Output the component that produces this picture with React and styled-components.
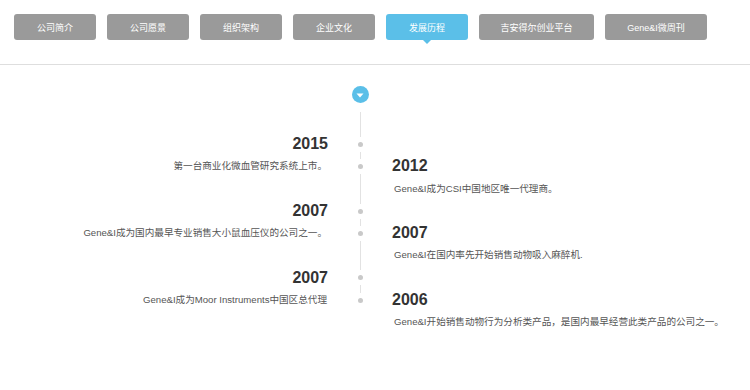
import React from 'react';
import styled, { createGlobalStyle } from 'styled-components';

const tabs = [
    { label: '公司简介', width: 82 },
    { label: '公司愿景', width: 82 },
    { label: '组织架构', width: 82 },
    { label: '企业文化', width: 82 },
    { label: '发展历程', width: 82, active: true },
    { label: '吉安得尔创业平台', width: 115 },
    { label: 'Gene&I微周刊', width: 102 },
];

// row = first grid row of the entry (year), desc sits on the next row
const events = [
    { side: 'left', row: 1, year: '2015', text: '第一台商业化微血管研究系统上市。' },
    { side: 'right', row: 2, year: '2012', text: 'Gene&I成为CSI中国地区唯一代理商。' },
    { side: 'left', row: 4, year: '2007', text: 'Gene&I成为国内最早专业销售大小鼠血压仪的公司之一。' },
    { side: 'right', row: 5, year: '2007', text: 'Gene&I在国内率先开始销售动物吸入麻醉机.' },
    { side: 'left', row: 7, year: '2007', text: 'Gene&I成为Moor Instruments中国区总代理' },
    { side: 'right', row: 8, year: '2006', text: 'Gene&I开始销售动物行为分析类产品，是国内最早经营此类产品的公司之一。' },
];

const GlobalStyle = createGlobalStyle`
body {
    margin: 0;
    background: #fff;
    font-family: "Liberation Sans", "Noto Sans CJK SC", sans-serif;
}`

export default function App() {
    return <Page>
        <GlobalStyle />
        <TabBar>
            {tabs.map(t => (
                <Tab key={t.label} $active={t.active} $width={t.width}>{t.label}</Tab>
            ))}
        </TabBar>
        <Timeline>
            <Head>
                <Circle>
                    <svg width="8" height="5" viewBox="0 0 8 5">
                        <path d="M0.5 0.5 L7.5 0.5 L4 4.5 Z" fill="#fff" />
                    </svg>
                </Circle>
            </Head>
            <Axis />
            {events.map((e, i) => (
                <React.Fragment key={i}>
                    <Dot $row={e.row + 1} />
                    <Year $side={e.side} $row={e.row + 1}>{e.year}</Year>
                    <Desc $side={e.side} $row={e.row + 2}>{e.text}</Desc>
                </React.Fragment>
            ))}
        </Timeline>
    </Page>;
}

const Page = styled.div`
width: 750px;
height: 390px;
background: #fff;`

const TabBar = styled.div`
display: flex;
gap: 11px;
padding: 14px 14px 24px;
border-bottom: 1px solid #dedede;`

const Tab = styled.div`
position: relative;
width: ${p => p.$width}px;
height: 26px;
border-radius: 3px;
background: ${p => p.$active ? '#5bbfe8' : '#9a9a9a'};
color: #fff;
font-size: 9px;
display: flex;
align-items: center;
justify-content: center;
&::after {
    content: '';
    display: ${p => p.$active ? 'block' : 'none'};
    position: absolute;
    left: 50%;
    bottom: -4px;
    margin-left: -4px;
    border-left: 4px solid transparent;
    border-right: 4px solid transparent;
    border-top: 4px solid #5bbfe8;
}`

const Timeline = styled.div`
display: grid;
grid-template-columns: 330px 60px 1fr;
grid-template-rows: 47px repeat(9, 22.3px);
margin-top: 21px;`

const Head = styled.div`
grid-column: 2;
grid-row: 1;
display: flex;
justify-content: center;`

const Circle = styled.div`
width: 17px;
height: 17px;
border-radius: 50%;
background: #5bbfe8;
display: flex;
align-items: center;
justify-content: center;
padding-top: 1px;
box-sizing: border-box;`

const Axis = styled.div`
grid-column: 2;
grid-row: 1 / 10;
position: relative;
&::before {
    content: '';
    position: absolute;
    left: 29.5px;
    width: 1px;
    top: 26px;
    bottom: 11px;
    background: #e2e2e2;
}`

const Dot = styled.div`
grid-column: 2;
grid-row: ${p => p.$row};
justify-self: center;
align-self: center;
width: 5px;
height: 5px;
border-radius: 50%;
background: #c9c9c9;
box-shadow: 0 0 0 5px #fff;
z-index: 1;`

const Year = styled.div`
grid-column: ${p => p.$side === 'left' ? 1 : 3};
grid-row: ${p => p.$row};
text-align: ${p => p.$side === 'left' ? 'right' : 'left'};
padding: ${p => p.$side === 'left' ? '0 2px 0 0' : '0 0 0 2px'};
font-size: 16px;
font-weight: bold;
color: #333;
line-height: 22.3px;`

const Desc = styled.div`
grid-column: ${p => p.$side === 'left' ? 1 : 3};
grid-row: ${p => p.$row};
text-align: ${p => p.$side === 'left' ? 'right' : 'left'};
padding: ${p => p.$side === 'left' ? '0 3px 0 0' : '0 0 0 4px'};
font-size: 9.6px;
color: #555;
line-height: 22.3px;
white-space: nowrap;`
